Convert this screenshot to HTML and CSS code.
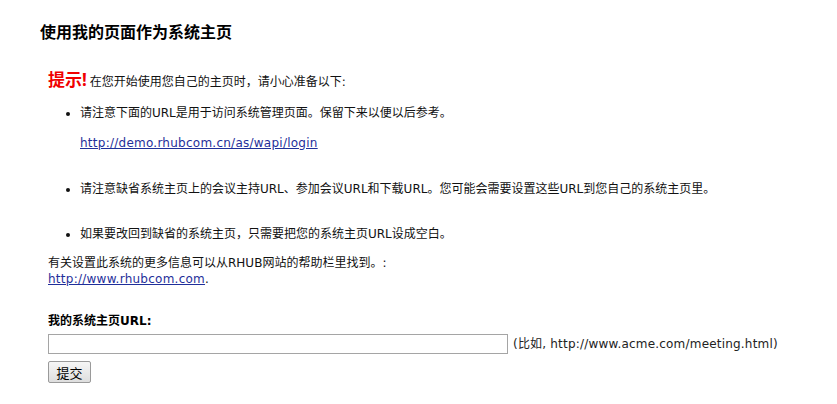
FILE: index.html
```html
<!DOCTYPE html>
<html lang="zh-CN">
<head>
<meta charset="utf-8">
<title>使用我的页面作为系统主页</title>
<link rel="stylesheet" href="styles.css">
</head>
<body>
<div class="page">
  <h2 class="title">使用我的页面作为系统主页</h2>
  <div class="content">
    <p class="tip"><span class="tip-label">提示!</span> 在您开始使用您自己的主页时，请小心准备以下:</p>
    <ul class="notes">
      <li class="note first">请注意下面的URL是用于访问系统管理页面。保留下来以便以后参考。
        <p class="admin-link"><a href="#">http://demo.rhubcom.cn/as/wapi/login</a></p>
      </li>
      <li class="note second">请注意缺省系统主页上的会议主持URL、参加会议URL和下载URL。您可能会需要设置这些URL到您自己的系统主页里。</li>
      <li class="note third">如果要改回到缺省的系统主页，只需要把您的系统主页URL设成空白。</li>
    </ul>
    <p class="more">有关设置此系统的更多信息可以从RHUB网站的帮助栏里找到。:<br><a href="#">http://www.rhubcom.com</a>.</p>
    <form class="url-form" onsubmit="return false">
      <label class="url-label" for="url">我的系统主页URL:</label>
      <div class="url-row">
        <input id="url" class="url-input" type="text">
        <span class="url-hint">(比如, http://www.acme.com/meeting.html)</span>
      </div>
      <button class="submit" type="submit">提交</button>
    </form>
  </div>
</div>
</body>
</html>
```

FILE: styles.css
```css
* { box-sizing: border-box; }
body {
  margin: 0;
  background: #fff;
  color: #111;
  font-family: "DejaVu Sans", "Noto Sans CJK SC", sans-serif;
  font-size: 12px;
  line-height: 16px;
}
.page {
  padding: 22px 0 0 40px;
}
.title {
  margin: 0;
  font-family: "Noto Sans", "Noto Sans CJK SC", sans-serif;
  font-size: 16px;
  line-height: 20px;
  font-weight: bold;
  color: #000;
}
.content {
  padding-left: 8px;
}
.tip {
  margin: 26px 0 0 0;
  line-height: 24px;
  display: flex;
  align-items: baseline;
  gap: 3px;
}
.tip-label {
  color: #f00000;
  font-family: "Noto Sans", "Noto Sans CJK SC", sans-serif;
  font-size: 17px;
  font-weight: bold;
}
.notes {
  margin: 11px 0 0 0;
  padding-left: 32px;
  list-style: disc;
}
.note { margin: 0; }
.note.second { margin-top: 30px; }
.note.third { margin-top: 29px; }
.admin-link {
  margin: 14px 0 0 0;
}
a {
  color: #1f2f9a;
  text-decoration: underline;
  letter-spacing: 0.25px;
}
.more {
  margin: 13px 0 0 0;
}
.url-form {
  margin-top: 26px;
  display: flex;
  flex-direction: column;
  align-items: flex-start;
}
.url-label {
  font-weight: bold;
  color: #000;
}
.url-row {
  margin-top: 5px;
  display: flex;
  align-items: center;
  gap: 5px;
}
.url-input {
  width: 460px;
  height: 20px;
  border: 1px solid #a5a5a5;
  padding: 0 3px;
  font: inherit;
  margin: 0;
}
.url-hint {
  color: #222;
  letter-spacing: 0.2px;
}
.submit {
  margin-top: 7px;
  width: 43px;
  height: 22px;
  padding: 0;
  font-family: "Noto Sans CJK SC", sans-serif;
  font-size: 13px;
  color: #000;
  background: linear-gradient(#f6f6f6, #dedede);
  border: 1px solid #9a9a9a;
  border-radius: 2px;
}
```
